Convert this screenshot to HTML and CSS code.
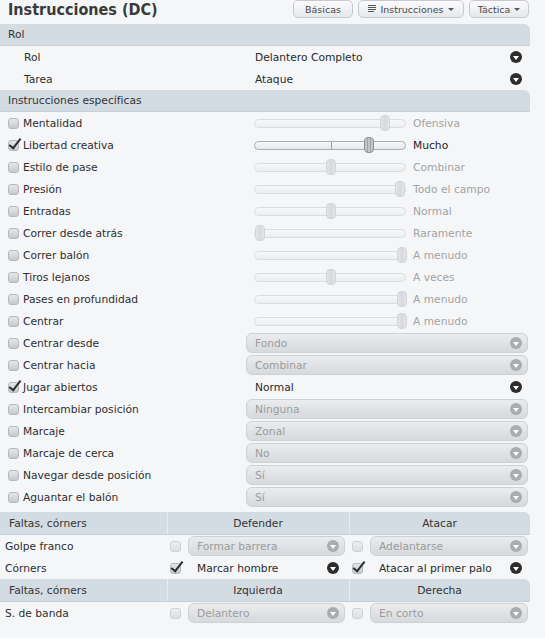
FILE: index.html
```html
<!DOCTYPE html>
<html lang="es">
<head>
    <meta charset="UTF-8">
    <title>Instrucciones (DC)</title>
    <link rel="stylesheet" href="styles.css">
</head>
<body>
<div class="panel">

    <div class="top">
        <h1 class="title">Instrucciones (DC)</h1>
        <div class="tabs">
            <button class="tab tab-basic">Básicas</button>
            <button class="tab tab-instr">
                <svg width="8" height="8" viewBox="0 0 8 8"><path d="M0 .5h8M0 2.5h8M0 4.5h8M0 6.5h6" stroke="#555" stroke-width="1"/></svg>
                Instrucciones <span class="caret"></span>
            </button>
            <button class="tab tab-tact">Táctica <span class="caret"></span></button>
        </div>
    </div>

    <div class="bar">Rol</div>
    <div class="row sub">
        <div class="name">Rol</div>
        <div class="select plain"><span>Delantero Completo</span><i class="drop dark"></i></div>
    </div>
    <div class="row sub">
        <div class="name">Tarea</div>
        <div class="select plain"><span>Ataque</span><i class="drop dark"></i></div>
    </div>

    <div class="bar">Instrucciones específicas</div>

    <div class="row">
        <div class="name"><span class="check"></span>Mentalidad</div>
        <div class="slider"><div class="track"><span class="thumb" style="left:125px"></span></div><span class="val">Ofensiva</span></div>
    </div>
    <div class="row">
        <div class="name"><span class="check on"></span>Libertad creativa</div>
        <div class="slider active"><div class="track"><span class="tick"></span><span class="thumb" style="left:109px"></span></div><span class="val">Mucho</span></div>
    </div>
    <div class="row">
        <div class="name"><span class="check"></span>Estilo de pase</div>
        <div class="slider"><div class="track"><span class="thumb" style="left:71px"></span></div><span class="val">Combinar</span></div>
    </div>
    <div class="row">
        <div class="name"><span class="check"></span>Presión</div>
        <div class="slider"><div class="track"><span class="thumb" style="left:140px"></span></div><span class="val">Todo el campo</span></div>
    </div>
    <div class="row">
        <div class="name"><span class="check"></span>Entradas</div>
        <div class="slider"><div class="track"><span class="thumb" style="left:71px"></span></div><span class="val">Normal</span></div>
    </div>
    <div class="row">
        <div class="name"><span class="check"></span>Correr desde atrás</div>
        <div class="slider"><div class="track"><span class="thumb" style="left:0px"></span></div><span class="val">Raramente</span></div>
    </div>
    <div class="row">
        <div class="name"><span class="check"></span>Correr balón</div>
        <div class="slider"><div class="track"><span class="thumb" style="left:142px"></span></div><span class="val">A menudo</span></div>
    </div>
    <div class="row">
        <div class="name"><span class="check"></span>Tiros lejanos</div>
        <div class="slider"><div class="track"><span class="thumb" style="left:71px"></span></div><span class="val">A veces</span></div>
    </div>
    <div class="row">
        <div class="name"><span class="check"></span>Pases en profundidad</div>
        <div class="slider"><div class="track"><span class="thumb" style="left:142px"></span></div><span class="val">A menudo</span></div>
    </div>
    <div class="row">
        <div class="name"><span class="check"></span>Centrar</div>
        <div class="slider"><div class="track"><span class="thumb" style="left:142px"></span></div><span class="val">A menudo</span></div>
    </div>

    <div class="row">
        <div class="name"><span class="check"></span>Centrar desde</div>
        <div class="select"><span>Fondo</span><i class="drop"></i></div>
    </div>
    <div class="row">
        <div class="name"><span class="check"></span>Centrar hacia</div>
        <div class="select"><span>Combinar</span><i class="drop"></i></div>
    </div>
    <div class="row">
        <div class="name"><span class="check on"></span>Jugar abiertos</div>
        <div class="select plain"><span>Normal</span><i class="drop dark"></i></div>
    </div>
    <div class="row">
        <div class="name"><span class="check"></span>Intercambiar posición</div>
        <div class="select"><span>Ninguna</span><i class="drop"></i></div>
    </div>
    <div class="row">
        <div class="name"><span class="check"></span>Marcaje</div>
        <div class="select"><span>Zonal</span><i class="drop"></i></div>
    </div>
    <div class="row">
        <div class="name"><span class="check"></span>Marcaje de cerca</div>
        <div class="select"><span>No</span><i class="drop"></i></div>
    </div>
    <div class="row">
        <div class="name"><span class="check"></span>Navegar desde posición</div>
        <div class="select"><span>Sí</span><i class="drop"></i></div>
    </div>
    <div class="row">
        <div class="name"><span class="check"></span>Aguantar el balón</div>
        <div class="select"><span>Sí</span><i class="drop"></i></div>
    </div>

    <!-- balon parado -->
    <div class="grid grid-head">
        <div class="cell first">Faltas, córners</div>
        <div class="cell center">Defender</div>
        <div class="cell center">Atacar</div>
    </div>
    <div class="grid">
        <div class="cell first">Golpe franco</div>
        <div class="cell"><span class="check off"></span><div class="select"><span>Formar barrera</span><i class="drop"></i></div></div>
        <div class="cell last"><span class="check off"></span><div class="select"><span>Adelantarse</span><i class="drop"></i></div></div>
    </div>
    <div class="grid">
        <div class="cell first">Córners</div>
        <div class="cell"><span class="check on"></span><div class="select plain"><span>Marcar hombre</span><i class="drop dark"></i></div></div>
        <div class="cell last"><span class="check on"></span><div class="select plain"><span>Atacar al primer palo</span><i class="drop dark"></i></div></div>
    </div>
    <div class="grid grid-head second">
        <div class="cell first">Faltas, córners</div>
        <div class="cell center">Izquierda</div>
        <div class="cell center">Derecha</div>
    </div>
    <div class="grid">
        <div class="cell first">S. de banda</div>
        <div class="cell"><span class="check off"></span><div class="select"><span>Delantero</span><i class="drop"></i></div></div>
        <div class="cell last"><span class="check off"></span><div class="select"><span>En corto</span><i class="drop"></i></div></div>
    </div>

</div>
</body>
</html>
```

FILE: styles.css
```css
body {
    margin: 0;
    background: #f5f6f8;
    font-family: "DejaVu Sans", sans-serif;
    font-size: 10.7px;
    color: #2e2e2e;
}
.panel {
    width: 530px;
}

/* cabecera */
.top {
    height: 24px;
    display: flex;
    justify-content: space-between;
    align-items: flex-start;
}
.title {
    margin: 0;
    padding-left: 8px;
    font-family: "DejaVu Sans Condensed", "DejaVu Sans", sans-serif;
    font-stretch: condensed;
    font-weight: bold;
    font-size: 16px;
    line-height: 20px;
    color: #3a3a3a;
}
.tabs {
    display: flex;
    gap: 5px;
    margin-right: 1px;
}
.tab {
    height: 18px;
    padding: 0;
    border: 1px solid #c6cacf;
    border-radius: 5px;
    background: linear-gradient(#fbfbfc, #e6e8eb);
    font-family: "DejaVu Sans", sans-serif;
    font-size: 9.5px;
    color: #4a4a4a;
    display: flex;
    align-items: center;
    justify-content: center;
    gap: 4px;
}
.tab-basic { width: 60px; }
.tab-instr { width: 106px; }
.tab-tact { width: 60px; }
.caret {
    width: 0;
    height: 0;
    border-left: 3px solid transparent;
    border-right: 3px solid transparent;
    border-top: 3px solid #555;
}

/* barras de seccion */
.bar {
    height: 22px;
    line-height: 22px;
    padding-left: 8px;
    background: #d3dce2;
    border-top-right-radius: 6px;
    border-bottom: 1px solid #c6d0d6;
    box-sizing: border-box;
    color: #333;
}

/* filas */
.row {
    display: flex;
    align-items: center;
    height: 22px;
}
.name {
    width: 246px;
    flex: none;
    display: flex;
    align-items: center;
    gap: 4px;
    padding-left: 8px;
    box-sizing: border-box;
}
.sub .name {
    padding-left: 24px;
}

.check {
    position: relative;
    width: 11px;
    height: 11px;
    flex: none;
    box-sizing: border-box;
    border: 1px solid #b4b7bb;
    border-radius: 3px;
    background: linear-gradient(#e6e7e9, #c7c9cc);
}
.check.off {
    border-color: #cfd2d5;
    background: linear-gradient(#eeeff1, #dcdee1);
}
.check.on::after {
    content: "";
    position: absolute;
    left: 3px;
    top: -5px;
    width: 4px;
    height: 11px;
    border-right: 2px solid #2b2b2b;
    border-bottom: 2px solid #2b2b2b;
    transform: rotate(38deg);
}

/* deslizadores */
.slider {
    display: flex;
    align-items: center;
    padding-left: 8px;
}
.track {
    position: relative;
    width: 152px;
    height: 9px;
    box-sizing: border-box;
    border: 1px solid #dadde0;
    border-radius: 5px;
    background: linear-gradient(#f6f7f8, #eceef0);
}
.slider.active .track {
    border-color: #a9acb0;
    background: linear-gradient(#f7f7f8, #e8e9eb);
}
.tick {
    position: absolute;
    left: 76px;
    top: 0;
    width: 1px;
    height: 7px;
    background: #9a9da1;
}
.thumb {
    position: absolute;
    top: -5px;
    width: 10px;
    height: 16px;
    box-sizing: border-box;
    border: 1px solid #d2d4d7;
    border-radius: 4px;
    background: linear-gradient(90deg, #e4e5e7, #d6d8db 50%, #e4e5e7);
}
.slider.active .thumb {
    border-color: #8e9296;
    background: repeating-linear-gradient(90deg, #c3c5c8 0 2px, #9fa2a6 2px 3px);
}
.val {
    margin-left: 7px;
    color: #a3a3a3;
}
.slider.active .val {
    color: #222;
}

/* desplegables */
.select {
    width: 282px;
    height: 20px;
    box-sizing: border-box;
    display: flex;
    align-items: center;
    padding: 0 5px 0 8px;
    border: 1px solid #cdd0d4;
    border-radius: 6px;
    background: linear-gradient(#eaecee, #d6d9dd);
    color: #9c9c9c;
}
.select span {
    flex: 1;
}
.select.plain {
    border-color: transparent;
    background: none;
    color: #2a2a2a;
}
.drop {
    width: 12px;
    height: 12px;
    flex: none;
    border-radius: 50%;
    background: #a9acb0;
    display: flex;
    align-items: center;
    justify-content: center;
}
.drop::after {
    content: "";
    margin-top: 2px;
    border-left: 3.5px solid transparent;
    border-right: 3.5px solid transparent;
    border-top: 4px solid #fff;
}
.drop.dark {
    background: #2d2d2d;
}

/* tabla de balon parado */
.grid {
    display: grid;
    grid-template-columns: 167px 182px 181px;
    height: 22px;
}
.grid-head {
    margin-top: 4px;
    background: #d3dce2;
    border-top-right-radius: 6px;
    border-bottom: 1px solid #c6d0d6;
}
.grid-head.second {
    margin-top: 0;
}
.cell {
    display: flex;
    align-items: center;
    gap: 7px;
    padding: 0 4px 0 3px;
}
.cell.last {
    padding-right: 2px;
}
.cell .select {
    width: auto;
    flex: 1;
}
.cell.first {
    padding-left: 5px;
}
.grid-head .cell {
    border-left: 1px solid #e6ebee;
    color: #333;
}
.grid-head .cell.first {
    border-left: none;
    padding-left: 9px;
}
.grid-head .center {
    justify-content: center;
}
```
